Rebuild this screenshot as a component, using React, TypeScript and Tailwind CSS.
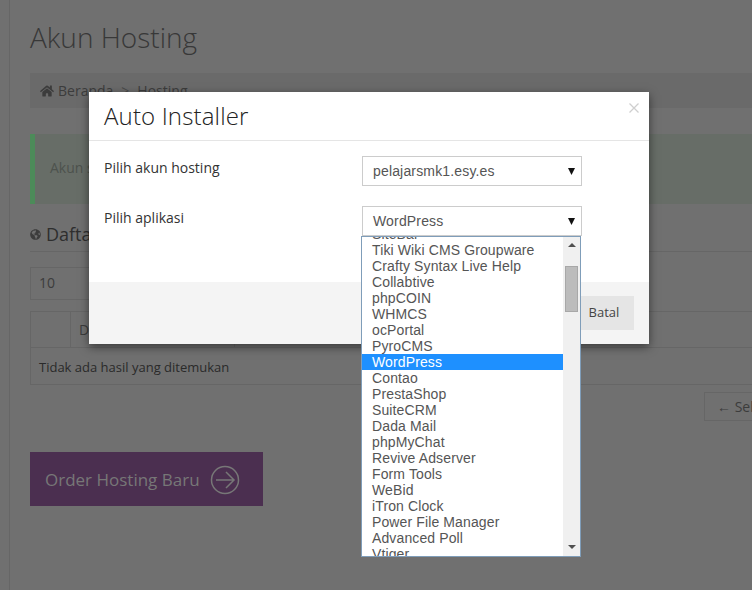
import { FaHome, FaGlobeAmericas } from 'react-icons/fa'

const apps = [
  'SiteBar',
  'Tiki Wiki CMS Groupware',
  'Crafty Syntax Live Help',
  'Collabtive',
  'phpCOIN',
  'WHMCS',
  'ocPortal',
  'PyroCMS',
  'WordPress',
  'Contao',
  'PrestaShop',
  'SuiteCRM',
  'Dada Mail',
  'phpMyChat',
  'Revive Adserver',
  'Form Tools',
  'WeBid',
  'iTron Clock',
  'Power File Manager',
  'Advanced Poll',
  'Vtiger',
]

function SelectBox({ value }: { value: string }) {
  return (
    <div className="flex h-[30px] w-[220px] items-center justify-between border border-[#cccccc] bg-white pl-[10px] pr-[6px] font-['Liberation_Sans',sans-serif] text-[14px] tracking-[0.16px] text-[#555555]">
      <span>{value}</span>
      <svg width="7" height="7" viewBox="0 0 7 7">
        <path d="M0 0h7L3.5 7z" fill="#111111" />
      </svg>
    </div>
  )
}

function AppList() {
  return (
    <div className="absolute left-[-1px] top-full z-10 flex h-[321px] w-[220px] overflow-hidden border border-[#7f9db9] bg-white font-['Liberation_Sans',sans-serif] text-[14px] leading-[16px] tracking-[0.12px] text-[#555555]">
      <ul className="mt-[-11px] w-[201px] shrink-0">
        {apps.map((app) => (
          <li
            key={app}
            className={app === 'WordPress' ? 'h-[16px] bg-[#1e90ff] pl-[10px] text-white' : 'h-[16px] pl-[10px]'}
          >
            {app}
          </li>
        ))}
      </ul>
      <div className="flex w-[17px] shrink-0 flex-col items-center bg-[#f0f0f0]">
        <svg className="mt-[6px]" width="8" height="4" viewBox="0 0 8 4">
          <path d="M4 0l4 4H0z" fill="#505050" />
        </svg>
        <div className="mt-[19px] h-[46px] w-[13px] border border-[#a8a8a8] bg-[#bcbcbc]" />
        <svg className="mt-auto mb-[7px]" width="8" height="4" viewBox="0 0 8 4">
          <path d="M0 0h8L4 4z" fill="#505050" />
        </svg>
      </div>
    </div>
  )
}

export default function App() {
  return (
    <div className="relative h-[590px] w-[752px] overflow-hidden bg-[#707070] font-['Open_Sans',sans-serif]">
      <div className="flex h-full">
        <div className="w-[10px] shrink-0 border-r border-[#666666]" />
        <main className="w-[742px] shrink-0 overflow-hidden pl-[20px]">
          <h1 className="mt-[17px] h-[41px] text-[28px] font-light leading-[41px] text-[#383838]">Akun Hosting</h1>
          <nav className="mt-[15px] flex h-[35px] items-center bg-[#6a6a6a] pl-[10px] text-[14px] text-[#3c3c3c]">
            <FaHome size={14} color="#3c3c3c" />
            <span className="ml-[4px]">Beranda</span>
            <span className="px-[8px] text-[#4a4a4a]">&gt;</span>
            <span>Hosting</span>
          </nav>
          <div className="mt-[26px] flex h-[70px] items-center border-l-[5px] border-[#4c8b59] bg-[#676d67] pb-[3px] pl-[15px] text-[14px] text-[#4d524d]">
            Akun sudah aktif
          </div>
          <div className="mt-[17px] flex h-[31px] items-center gap-[5px] border-b border-[#666666] pb-[4px] text-[18px] text-[#2e2e2e]">
            <FaGlobeAmericas size={11} color="#3c3c3c" />
            <span>Daftar Akun</span>
          </div>
          <div className="mt-[15px] flex h-[33px] w-[100px] items-center border border-[#666666] pb-[2px] pl-[8px] text-[14px] text-[#3c3c3c]">
            10
          </div>
          <div className="mt-[11px] w-[740px] border border-[#666666] text-[13px]">
            <div className="flex h-[36px] border-b border-[#666666] text-[14px] text-[#3c3c3c]">
              <div className="w-[40px] border-r border-[#666666]" />
              <div className="flex w-[164px] items-center border-r border-[#666666] pl-[8px]">Domain</div>
            </div>
            <div className="flex h-[36px] items-center pl-[8px] pt-[3px] text-[#2a2a2a]">Tidak ada hasil yang ditemukan</div>
          </div>
          <div className="ml-[674px] mt-[7px] flex h-[29px] w-[110px] items-center whitespace-nowrap border border-[#666666] pl-[12px] text-[14px] text-[#3c3c3c]">
            ← Sebelumnya
          </div>
          <a className="mt-[31px] flex h-[54px] w-[233px] items-center gap-[10px] bg-[#4b2f50] pl-[15px] pt-[2px] text-[17px] text-[#777777]">
            <span>Order Hosting Baru</span>
            <svg width="30" height="30" viewBox="0 0 30 30" fill="none" stroke="#777777" strokeWidth="1.5">
              <circle cx="15" cy="15" r="13.5" />
              <path d="M6 15h18M16 7l8 8-8 8" />
            </svg>
          </a>
        </main>
      </div>

      <div className="absolute left-[89px] top-[92px] flex h-[252px] w-[560px] flex-col bg-white shadow-[0_3px_9px_rgba(0,0,0,0.5)]">
        <header className="relative h-[49px] shrink-0 border-b border-[#e5e5e5] pl-[15px] pt-[7px] text-[24px] font-light leading-[33px] tracking-[0.15px] text-[#222222]">
          Auto Installer
          <svg className="absolute right-[10px] top-[11px]" width="10" height="10" viewBox="0 0 10 10" stroke="#cfcfcf" strokeWidth="1.3">
            <path d="M0.5 0.5l9 9M9.5 0.5l-9 9" />
          </svg>
        </header>
        <div className="grid flex-1 grid-cols-[258px_220px] content-start gap-y-[20px] pl-[15px] pt-[15px] text-[14px] text-[#333333]">
          <label className="pt-[1px]">Pilih akun hosting</label>
          <SelectBox value="pelajarsmk1.esy.es" />
          <label className="pt-[1px]">Pilih aplikasi</label>
          <div className="relative">
            <SelectBox value="WordPress" />
            <AppList />
          </div>
        </div>
        <footer className="flex h-[62px] shrink-0 items-center justify-end bg-[#f4f4f4] pr-[15px]">
          <button className="h-[34px] w-[60px] bg-[#e5e5e5] text-[13px] text-[#444444]">Batal</button>
        </footer>
      </div>
    </div>
  )
}
